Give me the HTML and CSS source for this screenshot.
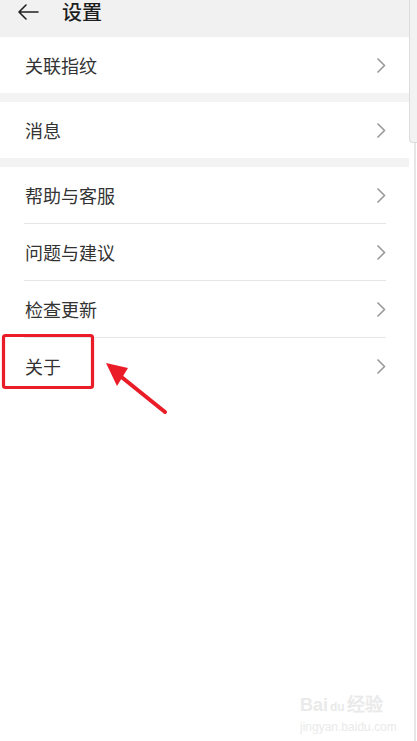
FILE: index.html
```html
<!DOCTYPE html>
<html lang="zh-CN">
<head>
<meta charset="utf-8">
<title>设置</title>
<link rel="stylesheet" href="styles.css">
</head>
<body>
<div class="screen">
  <div class="main">
    <header class="header">
      <svg class="back" width="22" height="16" viewBox="0 0 22 16"><path d="M21 8H2M9 1L2 8l7 7" fill="none" stroke="#222" stroke-width="1.6" stroke-linecap="round" stroke-linejoin="round"/></svg>
      <h1 class="title">设置</h1>
    </header>
    <section class="group">
      <div class="row"><span class="label">关联指纹</span><svg class="chev" width="10" height="17" viewBox="0 0 10 17"><path d="M1.5 1.5l7 7-7 7" fill="none" stroke="#9a9a9a" stroke-width="1.6"/></svg></div>
    </section>
    <section class="group">
      <div class="row"><span class="label">消息</span><svg class="chev" width="10" height="17" viewBox="0 0 10 17"><path d="M1.5 1.5l7 7-7 7" fill="none" stroke="#9a9a9a" stroke-width="1.6"/></svg></div>
    </section>
    <section class="group last">
      <div class="row"><span class="label">帮助与客服</span><svg class="chev" width="10" height="17" viewBox="0 0 10 17"><path d="M1.5 1.5l7 7-7 7" fill="none" stroke="#9a9a9a" stroke-width="1.6"/></svg></div>
      <div class="row line"><span class="label">问题与建议</span><svg class="chev" width="10" height="17" viewBox="0 0 10 17"><path d="M1.5 1.5l7 7-7 7" fill="none" stroke="#9a9a9a" stroke-width="1.6"/></svg></div>
      <div class="row line"><span class="label">检查更新</span><svg class="chev" width="10" height="17" viewBox="0 0 10 17"><path d="M1.5 1.5l7 7-7 7" fill="none" stroke="#9a9a9a" stroke-width="1.6"/></svg></div>
      <div class="row line"><span class="label">关于</span><svg class="chev" width="10" height="17" viewBox="0 0 10 17"><path d="M1.5 1.5l7 7-7 7" fill="none" stroke="#9a9a9a" stroke-width="1.6"/></svg></div>
    </section>
    <div class="fill"></div>
  </div>
  <aside class="edge">
    <div class="edge-top"></div>
    <div class="edge-bottom"></div>
  </aside>
  <svg class="annot" width="417" height="741" viewBox="0 0 417 741">
    <rect x="3.5" y="335.5" width="89" height="52" rx="2" fill="none" stroke="#ea1c27" stroke-width="3.2"/>
    <line x1="165" y1="412" x2="114" y2="371" stroke="#ea1c27" stroke-width="4" stroke-linecap="round"/>
    <polygon points="106,363 128,368 117,386" fill="#ea1c27"/>
  </svg>
  <div class="mark">
    <div class="mark-logo">Bai<span class="du">du</span>经验</div>
    <div class="mark-url">jingyan.baidu.com</div>
  </div>
</div>
</body>
</html>
```

FILE: styles.css
```css
* { box-sizing: border-box; margin: 0; padding: 0; }
html, body { width: 417px; height: 741px; overflow: hidden; background: #fff; }
body { font-family: "Noto Sans CJK SC", "Noto Sans", sans-serif; color: #333; }

.screen { position: relative; display: flex; width: 417px; height: 741px; }

.main { flex: 1; display: flex; flex-direction: column; background: #f3f3f3; }

.header {
  height: 37px;
  display: flex;
  align-items: center;
  padding: 0 0 13px 17px;
  background: #f1f1f1;
}
.back { display: block; }
.title { font-size: 20px; font-weight: 500; color: #1e1e1e; margin-left: 23px; line-height: 24px; }

.group { background: #fff; margin-bottom: 9px; }
.group.last { margin-bottom: 0; }

.row {
  height: 56px;
  display: flex;
  align-items: center;
  justify-content: space-between;
  padding: 0 0 0 25px;
  margin-right: 23px;
}
.row.line { border-top: 1px solid #e6e6e6; margin-left: 24px; padding-left: 1px; height: 57px; }
.label { font-size: 18px; color: #333; line-height: 24px; }
.chev { display: block; }

.fill { flex: 1; background: #fff; }

.edge { width: 8px; display: flex; flex-direction: column; background: #fff; }
.edge-top {
  height: 143px;
  background: #f2f2f2;
  border-left: 1px solid #dcdcdc;
  border-bottom: 1px solid #dcdcdc;
  border-bottom-left-radius: 4px;
}
.edge-bottom { flex: 1; border-right: 2px solid #e6e6e6; margin-right: 1px; }

.annot { position: absolute; left: 0; top: 0; pointer-events: none; }

.mark { position: absolute; left: 300px; top: 695px; color: #eaeaea; font-family: "Liberation Sans", sans-serif; }
.mark-logo { font-size: 18px; font-weight: 700; line-height: 20px; }
.mark-logo .du { font-size: 12px; margin: 0 2px; }
.mark-url { font-size: 12px; line-height: 16px; margin-top: 2px; }
```
